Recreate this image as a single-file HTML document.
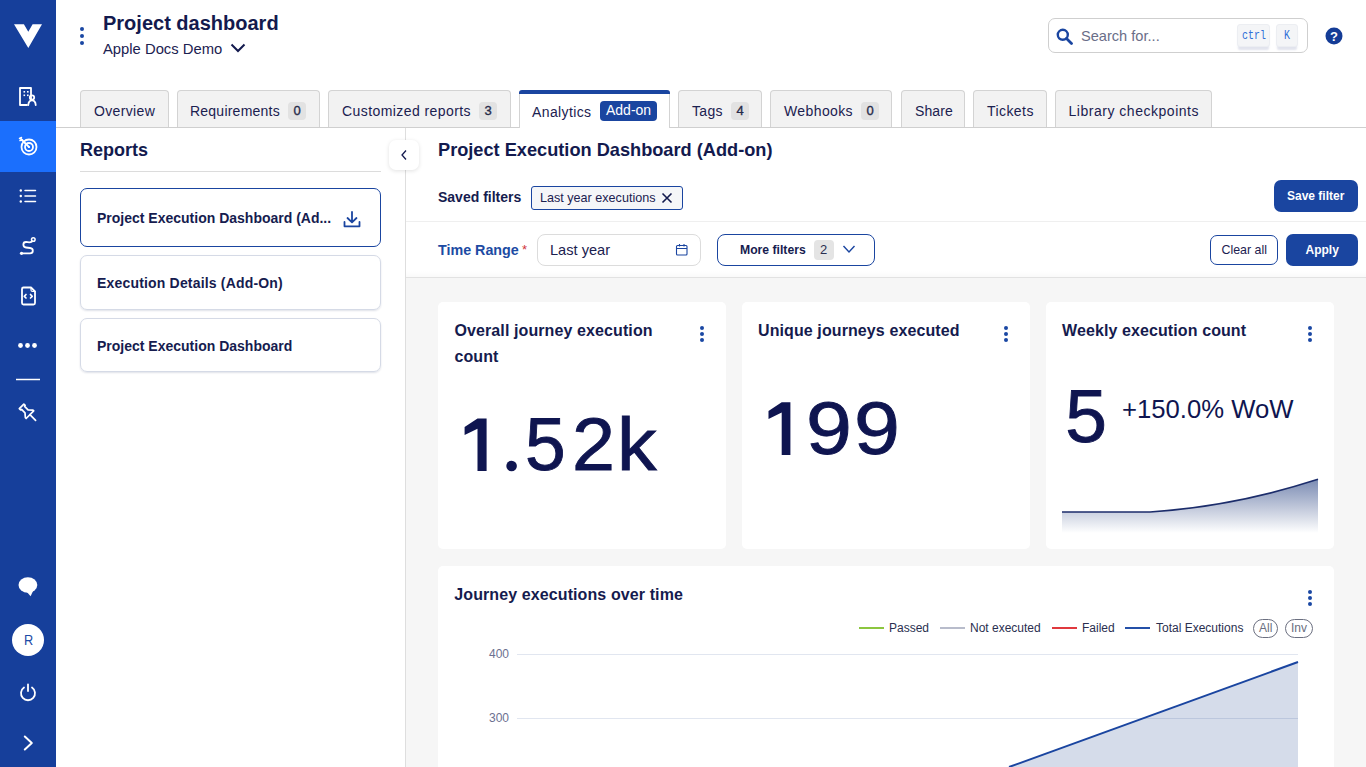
<!DOCTYPE html>
<html><head><meta charset="utf-8">
<style>
*{box-sizing:border-box;margin:0;padding:0}
html,body{width:1366px;height:767px;overflow:hidden;background:#fff;font-family:"Liberation Sans",sans-serif;color:#131a4e}
.a{position:absolute;white-space:nowrap;line-height:1}
#side{position:absolute;left:0;top:0;width:56px;height:767px;background:#163f9b}
.tab{position:absolute;top:90px;height:37px;background:#f2f2f2;border:1px solid #d3d3d3;border-bottom:none;border-radius:4px 4px 0 0}
.tl{position:absolute;top:13px;font-size:14px;line-height:1;letter-spacing:.35px;color:#1b2150;white-space:nowrap}
.badge{position:absolute;top:11px;width:18px;height:18px;margin-left:-1px;background:#e2e2e2;border-radius:4px;font-size:13px;line-height:18px;text-align:center;color:#262b4a;-webkit-text-stroke:.35px #262b4a}
.card{position:absolute;background:#fff;border-radius:5px}
.dots{position:absolute;width:4px}
.dots i{display:block;width:4px;height:4px;border-radius:50%;background:#1a47a3;margin-bottom:2.2px}
.rep{position:absolute;left:80px;width:301px;border:1px solid #d5dae6;border-radius:7px;box-shadow:0 1px 2px rgba(30,40,90,.14)}
.rt{position:absolute;left:16px;font-weight:bold;font-size:14px;line-height:1;color:#161c4f;white-space:nowrap}
.g{position:absolute;font-size:75px;line-height:1;color:#0f1550;transform-origin:0 0;-webkit-text-stroke:.9px #0f1550}
.ct{font-weight:bold;font-size:16px;color:#151b4e;letter-spacing:.1px}
</style></head><body>

<!-- sidebar -->
<div id="side">
  <div style="position:absolute;left:0;top:121px;width:56px;height:51px;background:#1b6ffd"></div>
  <svg style="position:absolute;left:0;top:0" width="56" height="767" viewBox="0 0 56 767" fill="none" stroke="#fff" stroke-width="1.8" stroke-linecap="round" stroke-linejoin="round">
    <!-- logo -->
    <path d="M14 24.2 L23.9 24.2 L28.3 31.8 L32.6 24.2 L42 24.2 L28.3 48 Z" fill="#fff" stroke="none"/>
    <!-- building -->
    <path d="M31 99 L31 88 L20 88 L20 105 L27 105"/>
    <rect x="23.5" y="91" width="1.6" height="1.6" fill="#fff" stroke="none"/>
    <rect x="27" y="91" width="1.6" height="1.6" fill="#fff" stroke="none"/>
    <rect x="23.5" y="94.5" width="1.6" height="1.6" fill="#fff" stroke="none"/>
    <rect x="27" y="94.5" width="1.6" height="1.6" fill="#fff" stroke="none"/>
    <circle cx="32" cy="97.5" r="2.2"/>
    <path d="M28.3 105 C28.5 101.5 30 100.3 32 100.3 C34 100.3 35.5 101.5 35.7 105"/>
    <!-- target -->
    <circle cx="29" cy="147" r="7.5"/>
    <circle cx="29" cy="147" r="4"/><circle cx="29" cy="147" r="1.1" fill="#fff" stroke="none"/>
    <path d="M29 147 L21 139"/>
    <path d="M19.5 138.5 L21.5 137.5 M20 140.5 L22.5 140" stroke-width="1.5"/>
    <!-- list -->
    <circle cx="20.8" cy="190.5" r="1.2" fill="#fff" stroke="none"/>
    <circle cx="20.8" cy="196" r="1.2" fill="#fff" stroke="none"/>
    <circle cx="20.8" cy="201.5" r="1.2" fill="#fff" stroke="none"/>
    <path d="M25 190.5 H35.5 M25 196 H35.5 M25 201.5 H35.5" stroke-width="1.5"/>
    <!-- route -->
    <circle cx="33.3" cy="239.5" r="1.8" stroke-width="1.5"/>
    <circle cx="21.5" cy="253.3" r="1.6" fill="#fff" stroke="none"/>
    <path d="M32 241.5 C30 243 28 242 26 242 C22.5 242 22.5 247 26 247.5 L30 248 C34 248.5 33.5 253.3 30 253.3 L21.5 253.3"/>
    <!-- file code -->
    <path d="M31 287.5 L23.5 287.5 Q22 287.5 22 289 L22 303 Q22 304.5 23.5 304.5 L33.5 304.5 Q35 304.5 35 303 L35 291.5 Z"/>
    <path d="M31 287.5 L31 290 Q31 291.5 32.5 291.5 L35 291.5" stroke-width="1.2"/>
    <path d="M26 294.5 L24.3 296.3 L26 298 M30.5 294.5 L32.2 296.3 L30.5 298" stroke-width="1.7"/>
    <!-- dots -->
    <circle cx="20.5" cy="345.5" r="2.4" fill="#fff" stroke="none"/>
    <circle cx="27.5" cy="345.5" r="2.4" fill="#fff" stroke="none"/>
    <circle cx="34.5" cy="345.5" r="2.4" fill="#fff" stroke="none"/>
    <!-- separator -->
    <path d="M16 379.5 H40" stroke-width="1.5" stroke-linecap="butt"/>
    <!-- pin -->
    <g transform="translate(28.4 413.2) rotate(-45) scale(1.07)" stroke-width="1.6">
      <path d="M-3 -9 L3 -9 L3 -7.3 L2 -7 L2 -2.5 L5 1 L5 2 L-5 2 L-5 1 L-2 -2.5 L-2 -7 L-3 -7.3 Z"/>
      <path d="M0 2 L0 9.5"/>
    </g>
    <!-- chat -->
    <ellipse cx="27.9" cy="585" rx="9.4" ry="7.8" fill="#fff" stroke="none"/><path d="M26 591 L30.6 596.3 L33.5 590 Z" fill="#fff" stroke="none"/>
    <!-- avatar -->
    <circle cx="28" cy="640" r="16" fill="#fff" stroke="none"/>
    <!-- power -->
    <path d="M24 687.5 A7 7 0 1 0 32 687.5"/>
    <path d="M28 684.5 L28 691"/>
    <!-- chevron -->
    <path d="M24.8 736.5 L31.8 743 L24.8 749.5" stroke-width="2"/>
  </svg>
  <div class="a" style="left:23.5px;top:632.5px;font-size:14.5px;color:#1c4aa6;transform:scaleX(.88);transform-origin:0 0">R</div>
</div>

<!-- header -->
<div class="dots" style="left:80px;top:27px"><i style="margin-bottom:3px"></i><i style="margin-bottom:3px"></i><i></i></div>
<div class="a" style="left:103px;top:13px;font-size:20px;font-weight:bold;color:#131a4e">Project dashboard</div>
<div class="a" style="left:103px;top:41.5px;font-size:14.8px;color:#1b2150">Apple Docs Demo</div>
<svg style="position:absolute;left:230px;top:43px" width="16" height="10" viewBox="0 0 16 10"><path d="M1.5 1.5 L8 8 L14.5 1.5" fill="none" stroke="#131a4e" stroke-width="2"/></svg>

<!-- search -->
<div style="position:absolute;left:1048px;top:18px;width:260px;height:35px;border:1px solid #cfcfcf;border-radius:7px"></div>
<svg style="position:absolute;left:1056px;top:28px" width="18" height="17" viewBox="0 0 18 17"><circle cx="6.8" cy="6.8" r="5" fill="none" stroke="#1a45a0" stroke-width="2.4"/><path d="M10.5 10.5 L15.5 15.5" stroke="#1a45a0" stroke-width="2.8" stroke-linecap="round"/></svg>
<div class="a" style="left:1081px;top:28.6px;font-size:14.6px;color:#6a6e88">Search for...</div>
<div style="position:absolute;left:1237px;top:24px;width:33px;height:23px;background:#f4f5f7;border-radius:3px;border:1px solid #eceef2;box-shadow:0 4px 2px -1px rgba(70,80,140,.16)"></div>
<div class="a" style="left:1242px;top:30px;font-size:12px;font-family:'Liberation Mono',monospace;color:#2f6fd8;transform:scaleX(.83);transform-origin:0 0">ctrl</div>
<div style="position:absolute;left:1276px;top:24px;width:22px;height:23px;background:#f4f5f7;border-radius:3px;border:1px solid #eceef2;box-shadow:0 4px 2px -1px rgba(70,80,140,.16)"></div>
<div class="a" style="left:1283.5px;top:30px;font-size:12px;font-family:'Liberation Mono',monospace;color:#2f6fd8;transform:scaleX(.83);transform-origin:0 0">K</div>
<svg style="position:absolute;left:1325px;top:27px" width="18" height="18" viewBox="0 0 18 18"><circle cx="9" cy="9" r="8.5" fill="#143c96"/><text x="9" y="14" text-anchor="middle" font-family="Liberation Sans" font-weight="bold" font-size="13" fill="#fff">?</text></svg>

<!-- tabs -->
<div style="position:absolute;left:56px;top:127px;width:1310px;height:1px;background:#cfcfcf"></div>
<div class="tab" style="left:80px;width:89px"><span class="tl" style="left:13px">Overview</span></div>
<div class="tab" style="left:177px;width:143px"><span class="tl" style="left:12px;letter-spacing:.23px">Requirements</span><span class="badge" style="left:111px">0</span></div>
<div class="tab" style="left:328px;width:183px"><span class="tl" style="left:13px;letter-spacing:.42px">Customized reports</span><span class="badge" style="left:151px">3</span></div>
<div class="tab" style="left:519px;width:151px;background:#fff;height:38px;border-top:none;z-index:2"><div style="position:absolute;left:-1px;top:0;width:151px;height:4px;background:#1a45a0;border-radius:3px 3px 0 0"></div><span class="tl" style="left:12px;top:14.5px;letter-spacing:.38px">Analytics</span><span style="position:absolute;left:80px;top:11px;width:57px;height:20px;background:#1a45a0;border-radius:4px"></span><span class="tl" style="left:86px;top:12.5px;color:#fff;font-size:14px;letter-spacing:0">Add-on</span></div>
<div class="tab" style="left:678px;width:84px"><span class="tl" style="left:13px">Tags</span><span class="badge" style="left:53px">4</span></div>
<div class="tab" style="left:770px;width:122px"><span class="tl" style="left:13px;letter-spacing:.39px">Webhooks</span><span class="badge" style="left:91px">0</span></div>
<div class="tab" style="left:901px;width:64px"><span class="tl" style="left:13px;letter-spacing:.08px">Share</span></div>
<div class="tab" style="left:973px;width:74px"><span class="tl" style="left:13px;letter-spacing:.43px">Tickets</span></div>
<div class="tab" style="left:1055px;width:157px"><span class="tl" style="left:12.5px;letter-spacing:.52px">Library checkpoints</span></div>

<!-- left panel -->
<div class="a" style="left:80px;top:141px;font-size:18px;font-weight:bold;color:#131a4e">Reports</div>
<div style="position:absolute;left:80px;top:171px;width:301px;height:1px;background:#dcdcdc"></div>
<div class="rep" style="top:188px;height:59px;border-color:#1a45a0;box-shadow:none"><span class="rt" style="top:21.5px">Project Execution Dashboard (Ad...</span>
  <svg style="position:absolute;left:262px;top:22px" width="18" height="17" viewBox="0 0 18 17" fill="none" stroke="#1a45a0" stroke-width="1.8" stroke-linecap="round" stroke-linejoin="round"><path d="M9 1 V11 M4.5 7 L9 11.3 L13.5 7 M1.5 11 V15.3 H16.5 V11"/></svg>
</div>
<div class="rep" style="top:255px;height:55px"><span class="rt" style="top:20px;letter-spacing:.18px">Execution Details (Add-On)</span></div>
<div class="rep" style="top:318px;height:54px"><span class="rt" style="top:20px">Project Execution Dashboard</span></div>
<div style="position:absolute;left:405px;top:128px;width:1px;height:639px;background:#dedede"></div>
<div style="position:absolute;left:389px;top:140px;width:30px;height:30px;background:#fff;border-radius:7px;box-shadow:0 1px 4px rgba(0,0,0,.12)"></div>
<svg style="position:absolute;left:398.5px;top:148px" width="10" height="14" viewBox="0 0 10 14"><path d="M7 2.5 L3 7 L7 11.5" fill="none" stroke="#131a4e" stroke-width="1.3"/></svg>

<!-- main header -->
<div class="a" style="left:438px;top:140.5px;font-size:18.2px;font-weight:bold;color:#131a4e">Project Execution Dashboard (Add-on)</div>
<div class="a" style="left:438px;top:189.8px;font-size:14px;font-weight:bold;color:#161c4f">Saved filters</div>
<div style="position:absolute;left:531px;top:186px;width:152px;height:24px;background:#f5f6f8;border:1px solid #1a45a0;border-radius:3px"></div>
<div class="a" style="left:540px;top:192px;font-size:12.6px;color:#1b2150">Last year executions</div>
<svg style="position:absolute;left:661px;top:192px" width="12" height="12" viewBox="0 0 12 12"><path d="M1.5 1.5 L10.5 10.5 M10.5 1.5 L1.5 10.5" stroke="#131a4e" stroke-width="1.6"/></svg>
<div style="position:absolute;left:1274px;top:180px;width:84px;height:32px;background:#1a45a0;border-radius:7px"></div>
<div class="a" style="left:1287px;top:189.8px;font-size:12px;font-weight:bold;color:#fff">Save filter</div>
<div style="position:absolute;left:406px;top:221px;width:960px;height:1px;background:#efefef"></div>

<div class="a" style="left:438px;top:242.8px;font-size:14.3px;font-weight:bold;color:#1c4ba3">Time Range</div>
<div class="a" style="left:522px;top:242.5px;font-size:13px;color:#d0353a">*</div>
<div style="position:absolute;left:537px;top:234px;width:164px;height:32px;border:1px solid #dcdcdc;border-radius:8px"></div>
<div class="a" style="left:550px;top:242.7px;font-size:14.6px;color:#1b2150">Last year</div>
<svg style="position:absolute;left:675px;top:243px" width="14" height="14" viewBox="0 0 14 14" fill="none" stroke="#1a45a0" stroke-width="1.1"><rect x="1.5" y="2.5" width="10.5" height="9.5" rx="1"/><path d="M1.5 5.5 H12 M4.5 1 V3.5 M9 1 V3.5"/></svg>
<div style="position:absolute;left:717px;top:234px;width:158px;height:32px;border:1px solid #1a45a0;border-radius:8px"></div>
<div class="a" style="left:740px;top:244.2px;font-size:12.2px;font-weight:bold;color:#161c4f">More filters</div>
<div style="position:absolute;left:814px;top:240px;width:20px;height:20px;background:#e4e4e4;border-radius:4px"></div>
<div class="a" style="left:820px;top:243px;font-size:13px;color:#2a2f50">2</div>
<svg style="position:absolute;left:842px;top:244px" width="14" height="10" viewBox="0 0 14 10"><path d="M1.5 2 L7 8 L12.5 2" fill="none" stroke="#1a45a0" stroke-width="1.4"/></svg>
<div style="position:absolute;left:1210px;top:235px;width:68px;height:30px;border:1px solid #1a45a0;border-radius:7px;background:#fff"></div>
<div class="a" style="left:1221.5px;top:243.9px;font-size:12.4px;color:#1b2150">Clear all</div>
<div style="position:absolute;left:1286px;top:234px;width:72px;height:32px;background:#1a45a0;border-radius:7px"></div>
<div class="a" style="left:1305.5px;top:244.3px;font-size:12px;font-weight:bold;color:#fff">Apply</div>

<!-- dashboard area -->
<div style="position:absolute;left:406px;top:271px;width:960px;height:6px;background:linear-gradient(rgba(0,0,0,0),rgba(0,0,0,.025))"></div>
<div style="position:absolute;left:406px;top:277px;width:960px;height:1px;background:#e2e2e2"></div>
<div style="position:absolute;left:406px;top:278px;width:960px;height:489px;background:#f6f6f6"></div>

<div class="card" style="left:438px;top:302px;width:288px;height:247px"></div>
<div class="card" style="left:742px;top:302px;width:288px;height:247px"></div>
<div class="card" style="left:1046px;top:302px;width:288px;height:247px"></div>
<div class="card" style="left:438px;top:566px;width:896px;height:260px"></div>

<div class="a ct" style="left:454.5px;top:322.6px">Overall journey execution</div>
<div class="a ct" style="left:454.5px;top:348.5px">count</div>
<div class="dots" style="left:700px;top:326px"><i></i><i></i><i></i></div>
<svg style="position:absolute;left:0;top:0" width="1366" height="767"><path d="M477.5 418.5 H486.6 V471 H477.5 V428.8 L464.6 435 V427 Z" fill="#0f1550"/><circle cx="511.6" cy="466" r="5.3" fill="#0f1550"/><path d="M781.7 402.3 H790.4 V455 H781.7 V412.6 L768.5 419 V411 Z" fill="#0f1550"/></svg><div class="g" style="left:525.4px;top:407px;transform:scaleX(.975)">5</div><div class="g" style="left:571.5px;top:407px;transform:scaleX(1.03)">2</div><div class="g" style="left:616.7px;top:407px;transform:scaleX(1.056)">k</div>

<div class="a ct" style="left:758px;top:322.6px">Unique journeys executed</div>
<div class="dots" style="left:1004px;top:326px"><i></i><i></i><i></i></div>
<div class="g" style="left:805.9px;top:391px;transform:scaleX(1.1)">9</div><div class="g" style="left:853.9px;top:391px;transform:scaleX(1.1)">9</div>

<div class="a ct" style="left:1062px;top:322.6px">Weekly execution count</div>
<div class="dots" style="left:1308px;top:326px"><i></i><i></i><i></i></div>
<div class="g" style="left:1065.2px;top:378.6px">5</div>
<div class="a" style="left:1122px;top:396.9px;font-size:25.7px;color:#0f1550">+150.0% WoW</div>
<svg style="position:absolute;left:1046px;top:460px" width="288" height="90" viewBox="1046 460 288 90">
  <defs><linearGradient id="g1" x1="0" y1="0" x2="0" y2="1"><stop offset="0" stop-color="#2a4585" stop-opacity=".62"/><stop offset="1" stop-color="#27407f" stop-opacity="0"/></linearGradient></defs>
  <path d="M1062 512 L1150 512 Q1234 506.4 1318 479.3 L1318 533 L1062 533 Z" fill="url(#g1)"/>
  <path d="M1062 512 L1150 512 Q1234 506.4 1318 479.3" fill="none" stroke="#1c2d6b" stroke-width="1.7"/>
</svg>

<div class="a ct" style="left:454.3px;top:587px">Journey executions over time</div>
<div class="dots" style="left:1308px;top:590px"><i></i><i></i><i></i></div>
<!-- legend -->
<div style="position:absolute;left:859px;top:627px;width:25px;height:2px;background:#8cc63f"></div>
<div class="a" style="left:889px;top:622px;font-size:12px;color:#2a2f50">Passed</div>
<div style="position:absolute;left:940px;top:627px;width:25px;height:2px;background:#b8bccb"></div>
<div class="a" style="left:970px;top:622px;font-size:12px;color:#2a2f50">Not executed</div>
<div style="position:absolute;left:1052px;top:627px;width:25px;height:2px;background:#e0393e"></div>
<div class="a" style="left:1082px;top:622px;font-size:12px;color:#2a2f50">Failed</div>
<div style="position:absolute;left:1125px;top:627px;width:25px;height:2px;background:#2450a8"></div>
<div class="a" style="left:1156px;top:622px;font-size:12px;color:#2a2f50">Total Executions</div>
<div style="position:absolute;left:1253px;top:619px;width:25px;height:19px;border:1px solid #6b6f80;border-radius:10px"></div>
<div class="a" style="left:1259px;top:622px;font-size:12px;color:#6b6f80">All</div>
<div style="position:absolute;left:1285px;top:619px;width:28px;height:19px;border:1px solid #6b6f80;border-radius:10px"></div>
<div class="a" style="left:1291px;top:622px;font-size:12px;color:#6b6f80">Inv</div>
<!-- chart -->
<div class="a" style="left:489px;top:648.3px;font-size:12px;color:#6c7090">400</div>
<div class="a" style="left:489px;top:712px;font-size:12px;color:#6c7090">300</div>
<svg style="position:absolute;left:438px;top:640px" width="896" height="127" viewBox="438 640 896 127">
  <path d="M517 654.5 H1298 M517 718.5 H1298" stroke="#e1e6f0" stroke-width="1"/>
  <path d="M1009 767 L1298 662 L1298 767 Z" fill="#d5dcea"/>
  <path d="M1142 718.5 H1298" stroke="#bcc7dd"/>
  <path d="M1009 767 L1298 662" stroke="#1a45a0" stroke-width="2" fill="none"/>
</svg>

</body></html>
